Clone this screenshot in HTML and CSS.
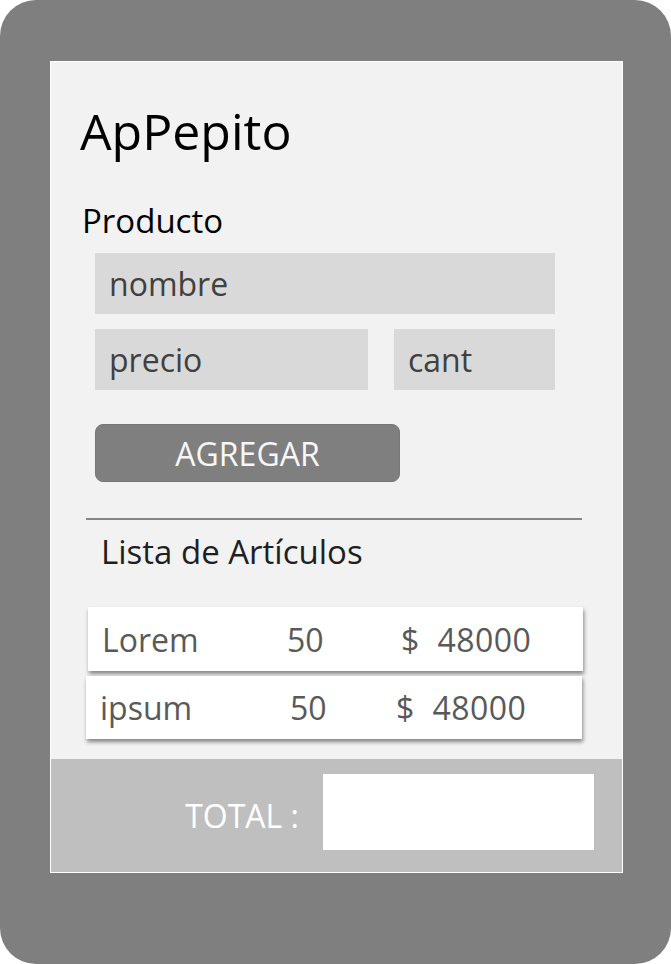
FILE: index.html
```html
<!DOCTYPE html>
<html lang="es">
<head>
<meta charset="utf-8">
<title>ApPepito</title>
<link rel="stylesheet" href="styles.css">
</head>
<body>
<div class="phone">
  <div class="screen">
    <h1 class="title">ApPepito</h1>
    <div class="label">Producto</div>
    <div class="field field-full">nombre</div>
    <div class="field-row">
      <div class="field field-price">precio</div>
      <div class="field field-qty">cant</div>
    </div>
    <button class="btn">AGREGAR</button>
    <div class="divider"></div>
    <div class="list-title">Lista de Artículos</div>
    <div class="item item-a"><span>Lorem</span><span>50</span><span class="price">$  48000</span></div>
    <div class="item item-b"><span>ipsum</span><span>50</span><span class="price">$  48000</span></div>
    <div class="footer">
      <span class="total-label">TOTAL :</span>
      <div class="total-box"></div>
    </div>
  </div>
</div>
</body>
</html>
```
FILE: styles.css
```css
html, body {
  margin: 0;
  padding: 0;
  background: #ffffff;
}
body {
  font-family: "Open Sans", "DejaVu Sans", sans-serif;
}
.phone {
  width: 671px;
  height: 964px;
  box-sizing: border-box;
  background: #7f7f7f;
  border-radius: 36px;
  padding: 61px 48px 0 50px;
}
.screen {
  box-sizing: border-box;
  width: 573px;
  height: 812px;
  background: #f2f2f2;
  border: 1px solid #ffffff;
  display: flex;
  flex-direction: column;
  align-items: flex-start;
}
.title {
  margin: 35px 0 0 29px;
  font-size: 50px;
  font-weight: 400;
  line-height: normal;
  color: #000;
}
.label {
  margin: 33px 0 0 31px;
  font-size: 33px;
  line-height: normal;
  color: #000;
}
.field {
  box-sizing: border-box;
  height: 61px;
  background: #d9d9d9;
  color: #404040;
  font-size: 32px;
  display: flex;
  align-items: center;
  padding-left: 14px;
}
.field-full {
  margin: 10px 0 0 44px;
  width: 460px;
}
.field-row {
  margin: 15px 0 0 44px;
  display: flex;
  gap: 26px;
}
.field-price {
  width: 273px;
}
.field-qty {
  width: 161px;
}
.btn {
  margin: 34px 0 0 44px;
  width: 305px;
  height: 58px;
  border: 1px solid #777;
  border-radius: 8px;
  background: #7f7f7f;
  color: #f7f7f7;
  font-family: "Open Sans", "DejaVu Sans", sans-serif;
  font-size: 32px;
  padding: 0;
  display: flex;
  align-items: center;
  justify-content: center;
}
.divider {
  margin: 36px 0 0 35px;
  width: 496px;
  height: 2px;
  background: #858585;
}
.list-title {
  margin: 9px 0 0 50px;
  font-size: 33px;
  line-height: normal;
  color: #1f1f1f;
}
.item {
  box-sizing: border-box;
  background: #ffffff;
  color: #595959;
  font-size: 32px;
  display: grid;
  align-items: center;
  box-shadow: 1px 3px 4px rgba(0, 0, 0, 0.45);
  white-space: pre;
}
.price {
  letter-spacing: 0.5px;
}
.item-a {
  margin: 33px 0 0 37px;
  width: 495px;
  height: 64px;
  padding-left: 14px;
  grid-template-columns: 185px 114px auto;
}
.item-b {
  margin: 5px 0 0 35px;
  width: 496px;
  height: 63px;
  padding-left: 14px;
  grid-template-columns: 190px 106px auto;
}
.footer {
  margin-top: auto;
  align-self: stretch;
  box-sizing: border-box;
  height: 113px;
  background: #bfbfbf;
  display: flex;
  align-items: flex-start;
  justify-content: flex-end;
  padding: 15px 28px 0 0;
}
.total-label {
  color: #ffffff;
  font-size: 32px;
  line-height: normal;
  margin: 20px 24px 0 0;
}
.total-box {
  width: 271px;
  height: 76px;
  background: #ffffff;
}
```
